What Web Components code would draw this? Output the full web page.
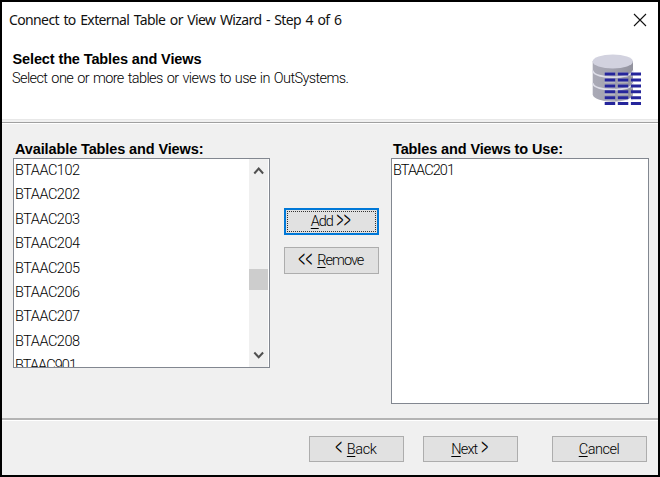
<!DOCTYPE html>
<html lang="en">
<head>
<meta charset="utf-8">
<title>Connect to External Table or View Wizard</title>
<style>
html,body{margin:0;height:100%;overflow:hidden;background:#000}
</style>
</head>
<body>
<wizard-dialog></wizard-dialog>
<script>
const define = (name, html, setup) => customElements.define(name, class extends HTMLElement {
  constructor() {
    super();
    this.attachShadow({ mode: 'open' }).innerHTML = html;
  }
  connectedCallback() { if (setup) setup.call(this, this.shadowRoot); }
});

// Single-line text whose tracking is adjusted to fill the given width.
define('fit-text', `<style>
  :host{display:block;white-space:nowrap;width:max-content}
  span{display:inline-block}
</style><span><slot></slot></span>`, function (root) {
  const span = root.querySelector('span');
  const want = parseFloat(this.getAttribute('width'));
  const count = this.textContent.length;
  span.style.letterSpacing = '0px';
  const have = span.getBoundingClientRect().width;
  span.style.letterSpacing = ((want - have) / (count - 1)) + 'px';
});

// Thin angle bracket, taller than the font's own.
define('angle-mark', `<style>
  :host{display:inline-block;width:7.300px;text-align:center;font:300 14px/14px Roboto,sans-serif;letter-spacing:0}
  span{display:inline-block;transform:translate(-.5px,-1px) scale(1,1.95);transform-origin:50% 60%}
</style><span><slot></slot></span>`);

define('push-button', `<style>
  :host{display:flex;box-sizing:border-box;width:95px;height:26px;border:1px solid #adadad;background:#e1e1e1;
    align-items:center;justify-content:center;font:300 14.5px/17px Roboto,"Liberation Sans",sans-serif;color:#000}
  :host([focused]){height:27px;border:2px solid #0078d7;padding:1px}
  div{display:flex;align-items:center;justify-content:center;gap:4px;width:100%;height:100%;box-sizing:border-box;padding-right:1px}
  :host([focused]) div{border:1px dotted #333}
</style><div><slot></slot></div>`);

define('list-item', `<style>
  :host{display:block;height:24.4px;padding-left:1px;flex:none;
    font:300 14.5px/24px Roboto,"Liberation Sans",sans-serif;color:#000}
</style><slot></slot>`);

define('scroll-bar', `<style>
  :host{display:flex;flex-direction:column;align-items:center;width:19px;background:#f0f0f0;margin-right:1px}
  svg{display:block;fill:none;stroke:#505050;stroke-width:2}
  svg:last-child{margin-top:auto}
  i{display:block;width:19px;height:21px;background:#cdcdcd;margin-top:88px}
</style>
<svg width="19" height="22"><path d="M5.3 14.500L9.700 9.500L14.100 14.500"/></svg>
<i></i>
<svg width="19" height="22"><path d="M5.3 7.5L9.7 12.2L14.1 7.5"/></svg>`);

define('list-box', `<style>
  :host{display:flex;box-sizing:border-box;border:1px solid #828790;background:#fff;overflow:hidden}
  div{flex:1;overflow:hidden;display:flex;flex-direction:column}
</style><div><slot></slot></div><slot name="bar"></slot>`);

define('database-icon', `<style>:host{display:block;width:50px;height:54px}svg{display:block}</style>
<svg width="50" height="54" viewBox="0 0 50 54">
  <defs><linearGradient id="g"><stop stop-color="#aaaab6"/><stop offset=".45" stop-color="#a3a3b0"/><stop offset="1" stop-color="#92929e"/></linearGradient></defs>
  <path d="M.7 7V40.500C2 50 40 50 41 40.500V7Z" fill="url(#g)"/>
  <path d="M.7 14.500C2 23.500 40 23.500 41 14.500" transform="translate(0 2)" fill="none" stroke="#dedee8" stroke-width="1.700"/>
  <path d="M.7 27C2 36 40 36 41 27" transform="translate(0 2)" fill="none" stroke="#dedee8" stroke-width="1.700"/>
  <ellipse cx="20.800" cy="7.500" rx="20.100" ry="7" fill="#d2d2df"/>
  <path stroke="#d8d8e4" stroke-width="5" stroke-dasharray="10.500 2.600" d="M12.500 20.500H41M12.500 26.500H41M12.500 32.500H41M12.500 38.500H41M12.500 44.500H41" opacity=".35"/>
  <path stroke="#25259b" stroke-width="3" stroke-dasharray="10.500 2.600" d="M12.700 20H49M12.700 26H49M12.700 32H49M12.700 37.800H49M12.700 43.800H49M12.700 49.600H49"/>
</svg>`);

define('wizard-dialog', `<style>
  :host{display:grid;grid-template-rows:117px 1fr 57px;box-sizing:border-box;width:660px;height:477px;
    border:2px solid #000;background:#f0f0f0;color:#000;font:300 14.5px/18px Roboto,"Liberation Sans",sans-serif}
  header{background:#fff;display:flex;justify-content:space-between;padding:0 10px 0 7px}
  .head{display:flex;flex-direction:column}
  .title{font:400 14px/20px "Noto Sans",sans-serif;margin-top:8px;color:#111;word-spacing:1.500px}
  .bold{font:700 14.5px/18px "Liberation Sans",Arial,sans-serif}
  .head .bold{margin:20px 0 0 3.500px}
  .sub{margin:2px 0 0 3px;word-spacing:1px}
  .side{display:flex;flex-direction:column;align-items:flex-end}
  .close{display:block;margin:11px 1px 0 0}
  database-icon{margin:27px 6px 0 0}
  main{border-top:1px solid #e8e8e8;box-sizing:border-box;padding:2px 0 0;display:flex;flex-direction:column}
  .rule{height:1px;background:#a0a0a0;border-bottom:1px solid #fff}
  .cols{display:grid;grid-template-columns:257px 95px 257px;column-gap:14px;padding:16px 0 0 11px}
  .cols .bold{margin:0 0 0 2px}
  .left list-box{height:210px}
  .right{margin-left:-2px}
  .right list-box{height:246px;width:258px}
  .mid{display:flex;flex-direction:column;gap:12px;padding-top:68px}
  footer{border-top:2px solid #b4b4b4;box-shadow:inset 0 1px #fff;display:flex;padding:16px 0 0 307px}
  footer push-button + push-button{margin-left:19px}
  footer push-button:last-child{margin-left:34px}
  u{text-underline-offset:2px;text-decoration-thickness:1px}
  .marks{display:flex}
</style>
<header>
  <div class="head">
    <fit-text class="title" width="333">Connect to External Table or View Wizard - Step 4 of 6</fit-text>
    <fit-text class="bold" width="189">Select the Tables and Views</fit-text>
    <fit-text class="sub" width="337">Select one or more tables or views to use in OutSystems.</fit-text>
  </div>
  <div class="side">
    <svg class="close" width="14" height="14"><path d="M1 1L13 13M13 1L1 13" stroke="#111" stroke-width="1.100"/></svg>
    <database-icon></database-icon>
  </div>
</header>
<main>
  <div class="rule"></div>
  <div class="cols">
    <section class="left">
      <fit-text class="bold" width="188.500">Available Tables and Views:</fit-text>
      <list-box id="available"><scroll-bar slot="bar"></scroll-bar></list-box>
    </section>
    <div class="mid">
      <push-button focused><fit-text width="23"><u>A</u>dd</fit-text><span class="marks"><angle-mark>&gt;</angle-mark><angle-mark>&gt;</angle-mark></span></push-button>
      <push-button style="height:27px"><span class="marks"><angle-mark>&lt;</angle-mark><angle-mark>&lt;</angle-mark></span><fit-text width="47"><u>R</u>emove</fit-text></push-button>
    </div>
    <section class="right">
      <fit-text class="bold" width="170">Tables and Views to Use:</fit-text>
      <list-box><list-item><fit-text width="62">BTAAC201</fit-text></list-item></list-box>
    </section>
  </div>
</main>
<footer>
  <push-button><angle-mark>&lt;</angle-mark><fit-text width="30"><u>B</u>ack</fit-text></push-button>
  <push-button><fit-text width="27"><u>N</u>ext</fit-text><angle-mark>&gt;</angle-mark></push-button>
  <push-button><fit-text width="41"><u>C</u>ancel</fit-text></push-button>
</footer>`, function (root) {
  const list = root.getElementById('available');
  if (list.querySelector('list-item')) return;
  for (const id of ['102', '202', '203', '204', '205', '206', '207', '208', '901']) {
    const item = document.createElement('list-item');
    item.innerHTML = `<fit-text width="${id === '901' ? 62 : 65}">BTAAC${id}</fit-text>`;
    list.append(item);
  }
});
</script>
</body>
</html>
